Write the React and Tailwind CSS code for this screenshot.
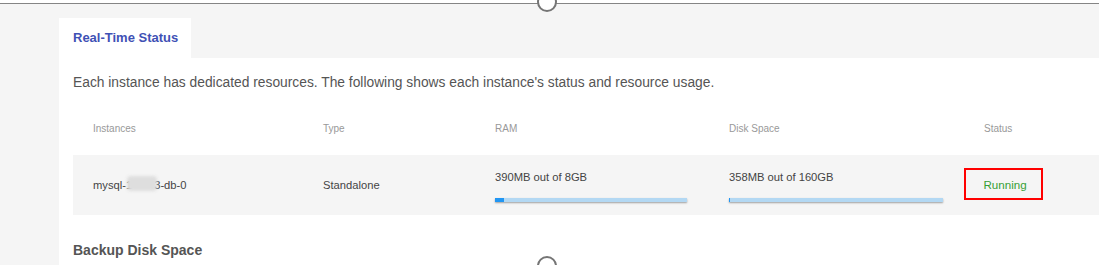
import React from "react";

function Bar({ width, pct }) {
  return (
    <div
      className="h-[4px] bg-[#b3d8f3] shadow-[0_1px_2px_rgba(0,0,0,0.35)]"
      style={{ width: `${width}px` }}
    >
      <div className="h-full bg-[#2196f3]" style={{ width: `${pct}%` }} />
    </div>
  );
}

export default function App() {
  return (
    <div className="relative w-[1099px] h-[265px] overflow-hidden bg-white font-['Liberation_Sans',Arial,sans-serif]">
      <div className="mt-[3px] border-t border-[#858585] bg-[#f5f5f5] h-[262px] pl-[59px] pt-[14px]">
        <div className="w-[132px] h-[40px] bg-white flex items-center pl-[14px] text-[13px] font-bold text-[#3f51b5]">
          Real-Time Status
        </div>
        <div className="bg-white h-[300px] pl-[14px] pt-[15px]">
          <p className="text-[13.8px] leading-[20px] text-[#555]">
            Each instance has dedicated resources. The following shows each instance's status and resource usage.
          </p>
          <div className="mt-[29px] grid grid-cols-[230px_172px_234px_255px_1fr] pl-[20px] text-[10px] leading-[14px] text-[#999]">
            <div>Instances</div>
            <div>Type</div>
            <div>RAM</div>
            <div>Disk Space</div>
            <div>Status</div>
          </div>
          <div className="mt-[19px] h-[60px] bg-[#f5f5f5] grid grid-cols-[230px_172px_234px_255px_1fr] items-center pl-[20px] text-[11.2px] leading-[14px] text-[#444]">
            <div className="relative">
              <span>mysql-1</span>
              <span className="inline-block w-[22px]" />
              <span>3-db-0</span>
              <span className="absolute left-[34px] top-[-2px] w-[30px] h-[15px] rounded-[4px] bg-[#dedede] blur-[1.5px]" />
            </div>
            <div>Standalone</div>
            <div className="flex flex-col pt-[2px]">
              <span>390MB out of 8GB</span>
              <div className="mt-[14px]">
                <Bar width={192} pct={4.8} />
              </div>
            </div>
            <div className="flex flex-col pt-[2px]">
              <span>358MB out of 160GB</span>
              <div className="mt-[14px]">
                <Bar width={214} pct={0.2} />
              </div>
            </div>
            <div className="-ml-[20px] mt-[-3px]">
              <div className="w-[79px] h-[32px] border-[2.5px] border-[#ff0000] flex items-center pl-[17.5px] pt-[3px] text-[11.6px] text-[#35a035]">
                Running
              </div>
            </div>
          </div>
          <div className="mt-[26px] text-[14px] leading-[18px] font-bold text-[#555]">
            Backup Disk Space
          </div>
        </div>
      </div>
      <svg className="absolute left-[536px] top-[-9px]" width="22" height="22" viewBox="0 0 22 22">
        <circle cx="11" cy="11" r="9" fill="white" stroke="#757575" strokeWidth="2" />
      </svg>
      <svg className="absolute left-[536px] top-[255px]" width="22" height="22" viewBox="0 0 22 22">
        <circle cx="11" cy="11" r="9" fill="white" stroke="#757575" strokeWidth="2" />
      </svg>
    </div>
  );
}
